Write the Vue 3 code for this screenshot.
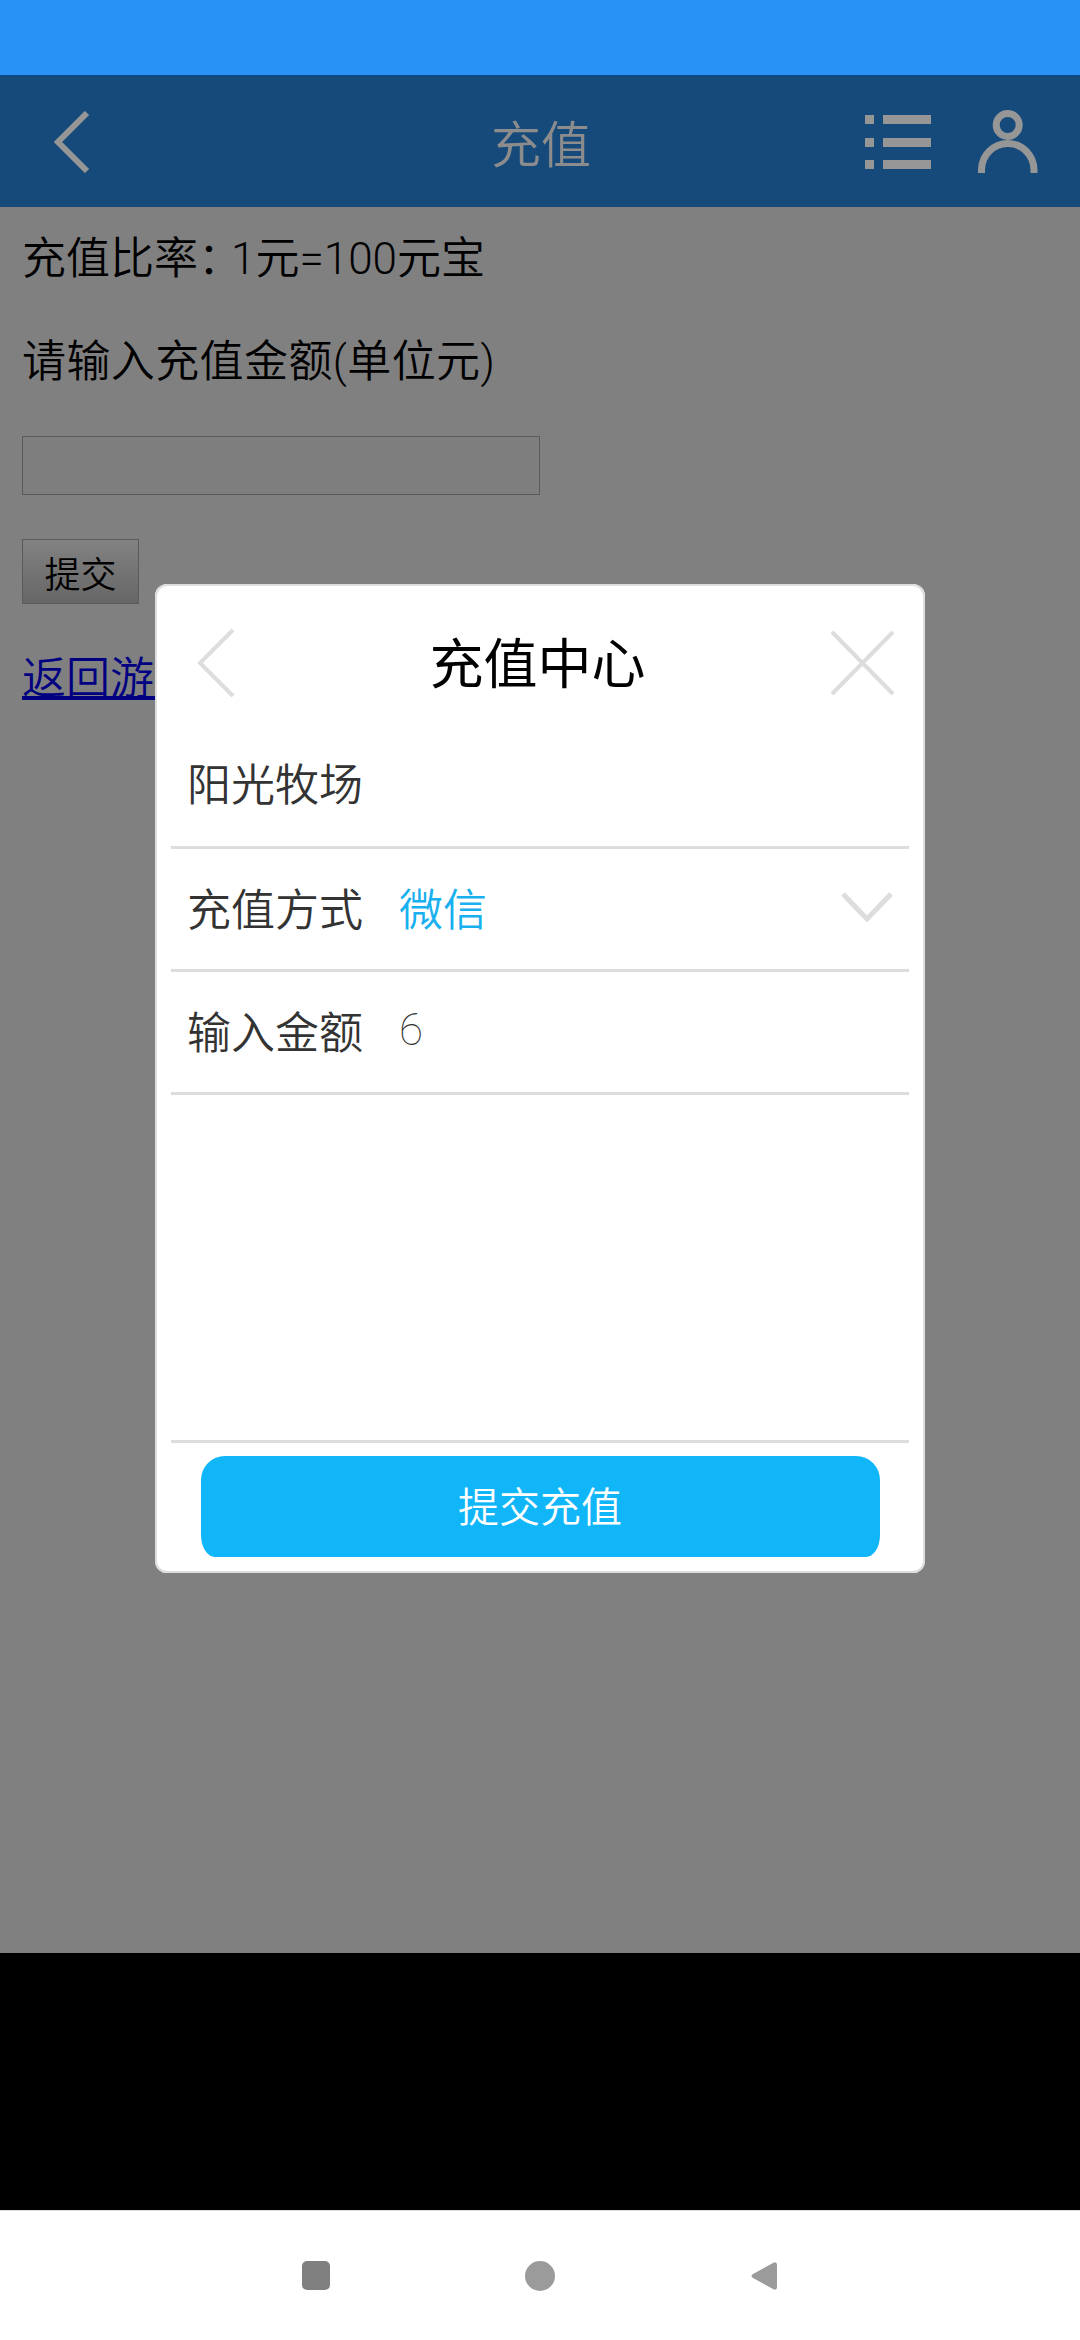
<script setup>
const rows = [
  { label: '充值方式', value: '微信', kind: 'select' },
  { label: '输入金额', value: '6', kind: 'amount' }
]
</script>

<template>
  <div class="phone">
    <div class="status-bar"></div>

    <div class="screen">
      <header class="app-header">
        <svg class="header-back" width="36" height="62" viewBox="0 0 36 62">
          <path d="M33 2 L4 31 L33 60" fill="none" stroke="#969696" stroke-width="6" />
        </svg>
        <h1 class="header-title">充值</h1>
        <svg class="header-list" width="66" height="54" viewBox="0 0 66 54">
          <path d="M0 0h9v9H0zM18 0h48v9H18zM0 23h9v9H0zM18 23h48v9H18zM0 45h9v9H0zM18 45h48v9H18z" fill="#969696" />
        </svg>
        <svg class="header-user" width="60" height="64" viewBox="0 0 60 64">
          <circle cx="29.7" cy="15" r="11.500" fill="none" stroke="#969696" stroke-width="7" />
          <path d="M3.500 63 V60 A26.200 26.500 0 0 1 56 60 V63" fill="none" stroke="#969696" stroke-width="7" />
        </svg>
      </header>

      <main class="content">
        <p class="rate">充值比率<span class="colon">：</span>1元=100元宝</p>
        <p class="prompt">请输入充值金额(单位元)</p>
        <input class="amount-input" type="text" />
        <button class="submit-plain" type="button">提交</button>
        <a class="back-link" href="#">返回游戏</a>
      </main>
    </div>

    <nav class="nav-bar">
      <span class="nav-square"></span>
      <span class="nav-circle"></span>
      <svg width="28" height="30" viewBox="0 0 28 30">
        <path d="M23 2 L3 13 Q0 15 3 17 L23 28 Q27 30 27 26 V4 Q27 0 23 2 Z" fill="#9b9b9b" />
      </svg>
    </nav>

    <div class="dialog-layer">
      <section class="dialog">
        <div class="dialog-head">
          <svg width="38" height="70" viewBox="0 0 38 70">
            <path d="M36 2 L3 35 L36 68" fill="none" stroke="#ddd" stroke-width="4" />
          </svg>
          <h2 class="dialog-title">充值中心</h2>
          <svg width="65" height="66" viewBox="0 0 65 66">
            <path d="M2 2 L63 64 M63 2 L2 64" fill="none" stroke="#ddd" stroke-width="4" />
          </svg>
        </div>

        <div class="dialog-row dialog-row--game">阳光牧场</div>
        <div v-for="row in rows" :key="row.label" class="dialog-row">
          <span class="row-label">{{ row.label }}</span>
          <span class="row-value" :class="'row-value--' + row.kind">{{ row.value }}</span>
          <svg v-if="row.kind === 'select'" class="row-caret" width="52" height="30" viewBox="0 0 52 30">
            <path d="M2 2 L26 27 L50 2" fill="none" stroke="#ddd" stroke-width="5" />
          </svg>
        </div>

        <div class="dialog-foot">
          <button class="dialog-submit" type="button">提交充值</button>
        </div>
      </section>
    </div>
  </div>
</template>

<style scoped>
.phone {
  position: relative;
  display: flex;
  flex-direction: column;
  width: 1080px;
  height: 2340px;
  overflow: hidden;
  font-family: Roboto, "Noto Sans CJK SC", sans-serif;
  font-weight: 350;
  background: #000;
}

.status-bar {
  flex: 0 0 75px;
  background: #2892f6;
}

.screen {
  flex: 0 0 2135px;
  background: #000;
}

.app-header {
  display: flex;
  align-items: center;
  height: 132px;
  padding: 0 42px 0 54px;
  box-sizing: border-box;
  border-top: 2px solid #0f4880;
  background: #154a7b;
}

.header-title {
  flex: 1;
  margin: 0 0 3px;
  padding-left: 127px;
  color: #8c8c8c;
  font-size: 50px;
  font-weight: 350;
  text-align: center;
}

.header-list {
  margin-right: 47px;
}

.content {
  display: flex;
  flex-direction: column;
  align-items: flex-start;
  height: 1746px;
  padding: 0 22px;
  box-sizing: border-box;
  background: #808080;
  color: #000;
  font-size: 44px;
}

.rate,
.prompt {
  margin: 0;
  line-height: 60px;
}

.rate {
  margin-top: 22px;
}

.prompt {
  margin-top: 43px;
  letter-spacing: 0.4px;
}

.colon {
  letter-spacing: -11px;
}

.amount-input {
  width: 518px;
  height: 59px;
  margin-top: 44px;
  padding: 0;
  box-sizing: border-box;
  border: 1px solid #5a5a5a;
  background: #7e7e7e;
}

.submit-plain {
  width: 117px;
  height: 65px;
  margin-top: 44px;
  padding: 0;
  box-sizing: border-box;
  border: 1px solid #5a5a5a;
  background: linear-gradient(#828282, #666);
  color: #000;
  font-family: inherit;
  font-size: 36px;
  font-weight: 350;
}

.back-link {
  margin-top: 49px;
  color: #000080;
  line-height: 52px;
  text-decoration-thickness: 4px;
}

.nav-bar {
  display: flex;
  align-items: center;
  flex: 0 0 130px;
  gap: 195px;
  padding-left: 302px;
  box-sizing: border-box;
  border-top: 1px solid #ddd;
  background: #fff;
}

.nav-square {
  width: 28px;
  height: 29px;
  border-radius: 5px;
  background: #808080;
}

.nav-circle {
  width: 30px;
  height: 30px;
  border-radius: 50%;
  background: #9b9b9b;
}

.dialog-layer {
  position: absolute;
  top: 584px;
  left: 0;
  display: flex;
  justify-content: center;
  width: 1080px;
}

.dialog {
  display: flex;
  flex-direction: column;
  width: 770px;
  height: 989px;
  padding: 0 16px;
  box-sizing: border-box;
  border-radius: 12px;
  background: #fff;
  box-shadow: inset 0 0 0 2px #ddd;
}

.dialog-head {
  display: flex;
  align-items: center;
  justify-content: space-between;
  height: 158px;
  padding: 0 14px 0 26px;
}

.dialog-title {
  margin: 0 0 5px;
  color: #000;
  font-size: 54px;
  font-weight: 400;
  transform: translateX(5px);
}

.dialog-row {
  display: flex;
  align-items: center;
  height: 123px;
  padding: 0 16px 4px;
  border-bottom: 3px solid #ddd;
  box-sizing: border-box;
  color: #333;
  font-size: 44px;
}

.dialog-row--game {
  height: 107px;
  padding-bottom: 24px;
}

.row-label {
  width: 212px;
  flex: none;
}

.row-value--select {
  flex: 1;
  color: #18b0ee;
}

.row-value--amount {
  color: #333;
  font-weight: 100;
}

.dialog-foot {
  display: flex;
  justify-content: center;
  align-items: flex-start;
  margin-top: auto;
  height: 133px;
  padding-top: 13px;
  box-sizing: border-box;
  border-top: 3px solid #ddd;
}

.dialog-submit {
  width: 679px;
  height: 101px;
  padding: 0 0 6px;
  border: 0;
  border-radius: 24px 24px 14px 14px / 24px 24px 22px 22px;
  background: #11b6f9;
  color: #fff;
  font-family: inherit;
  font-size: 41px;
  font-weight: 350;
}
</style>
